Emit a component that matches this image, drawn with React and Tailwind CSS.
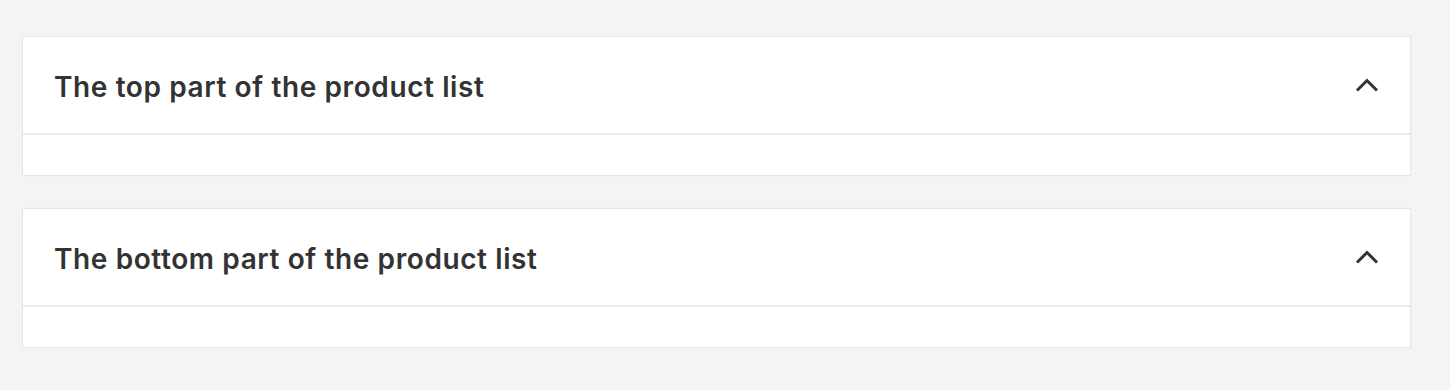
import React from "react";

function Chevron() {
  return (
    <svg width="24" height="14" viewBox="0 0 24 14" fill="none" className="block">
      <polyline points="2,12.5 12,2.5 22,12.5" stroke="#333333" strokeWidth="3" strokeLinejoin="miter" />
    </svg>
  );
}

function Section({ title }) {
  return (
    <div className="bg-white border border-[#e6e6e6] shadow-[0_0_2px_rgba(0,0,0,0.04)]">
      <div className="h-[98px] flex items-center justify-between pl-[31px] pr-[31px] border-b-2 border-[#ececec]">
        <h2
          className="pt-[4px] text-[28px] leading-[34px] font-semibold text-[#333333] tracking-[0.6px]"
          style={{ fontFamily: "Inter, 'Liberation Sans', sans-serif" }}
        >
          {title}
        </h2>
        <Chevron />
      </div>
      <div className="h-[40px]" />
    </div>
  );
}

export default function App() {
  return (
    <div className="min-h-screen bg-[#f4f4f4] pt-[36px] pl-[22px] pr-[39px] flex flex-col gap-[32px]">
      <Section title="The top part of the product list" />
      <Section title="The bottom part of the product list" />
    </div>
  );
}
